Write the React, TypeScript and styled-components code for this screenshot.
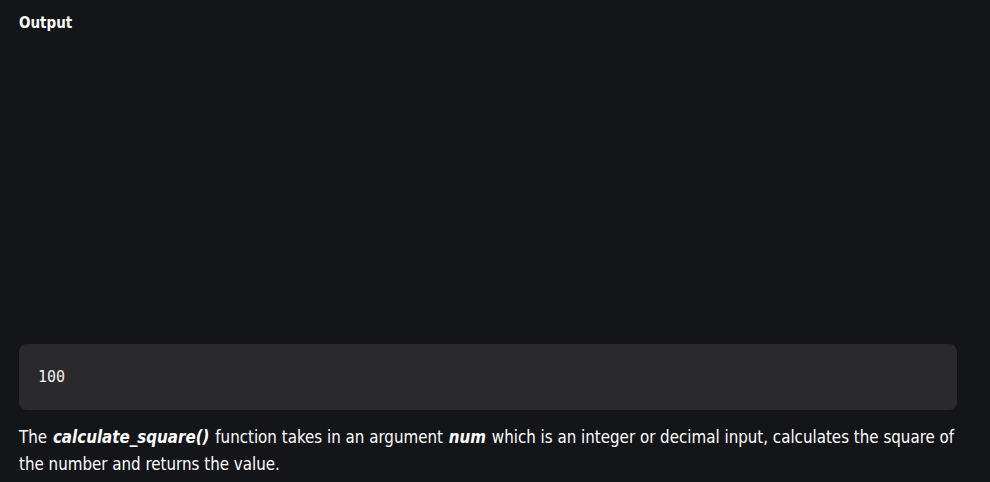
import React from "react";
import styled, { createGlobalStyle } from "styled-components";

const Global = createGlobalStyle`
  html, body { margin: 0; padding: 0; background: #141519; }
  body { width: 990px; height: 482px; overflow: hidden; }
`;

const Page = styled.div`
  box-sizing: border-box;
  width: 990px;
  height: 482px;
  padding: 12px 33px 0 19px;
  display: flex;
  flex-direction: column;
  color: #ffffff;
  font-family: "DejaVu Sans Condensed", "DejaVu Sans", sans-serif;
`;

const Title = styled.div`
  font-size: 15px;
  font-weight: 700;
  line-height: 22px;
`;

const Spacer = styled.div`
  height: 310px;
`;

const CodeBox = styled.div`
  box-sizing: border-box;
  height: 66px;
  background: #2a2a2d;
  border-radius: 8px;
  padding: 0 19px;
  display: flex;
  align-items: center;
  font-family: "DejaVu Sans Mono", monospace;
  font-size: 15px;
  color: #f2f2f2;
`;

const Para = styled.p`
  margin: 14px 0 0;
  font-size: 16.8px;
  line-height: 27px;
  color: #ffffff;
`;

const Em = styled.b`
  font-style: italic;
  font-weight: 700;
  padding: 0 1px;
`;

export default function App() {
  return (
    <>
      <Global />
      <Page>
        <Title>Output</Title>
        <Spacer />
        <CodeBox>100</CodeBox>
        <Para>
          The <Em>calculate_square()</Em> function takes in an argument <Em>num</Em> which is an integer or decimal input, calculates the square of the number and returns the value.
        </Para>
      </Page>
    </>
  );
}
